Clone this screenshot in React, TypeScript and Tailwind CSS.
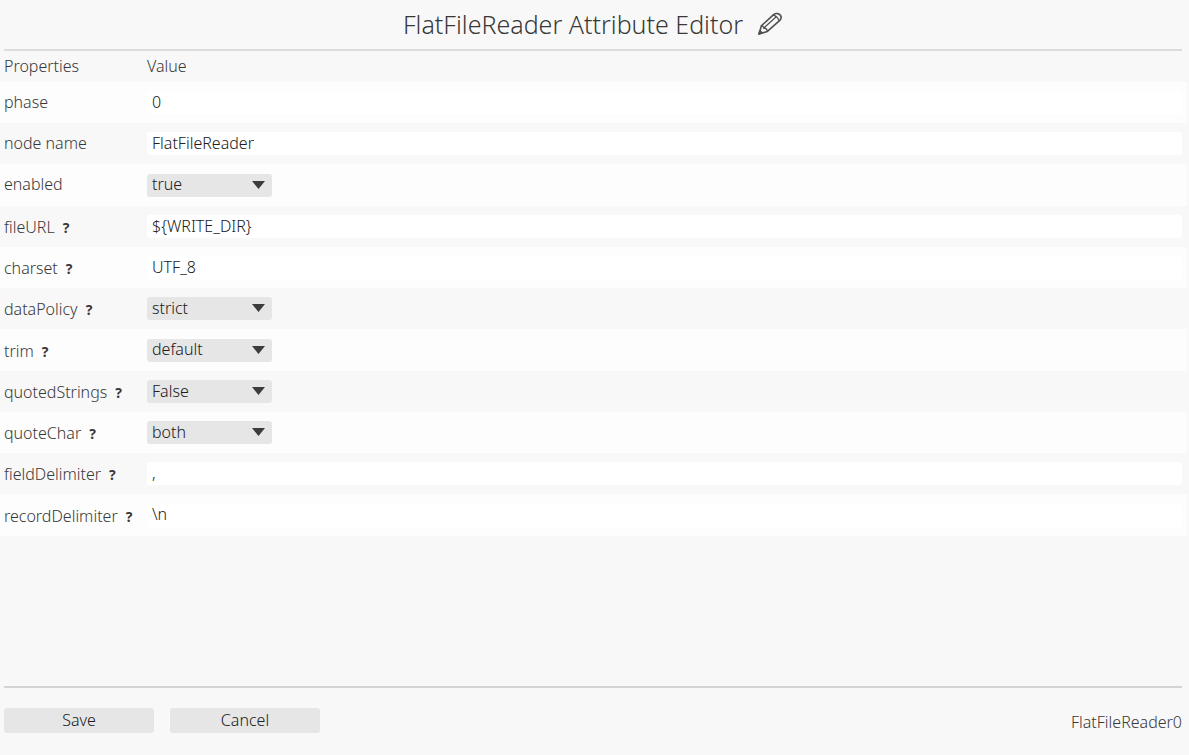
import { useState } from "react";

type Field = {
  name: string;
  value: string;
  options?: string[];
  help?: string;
};

const fields: Field[] = [
  { name: "phase", value: "0" },
  { name: "node name", value: "FlatFileReader" },
  { name: "enabled", value: "true", options: ["true", "false"] },
  { name: "fileURL", value: "${WRITE_DIR}", help: "Path of the file to read" },
  { name: "charset", value: "UTF_8", help: "Character encoding of the file" },
  { name: "dataPolicy", value: "strict", options: ["strict", "controlled", "lenient"], help: "How malformed records are handled" },
  { name: "trim", value: "default", options: ["default", "true", "false"], help: "Trim surrounding whitespace" },
  { name: "quotedStrings", value: "False", options: ["False", "True"], help: "Whether fields may be quoted" },
  { name: "quoteChar", value: "both", options: ["both", "single", "double"], help: "Accepted quote character" },
  { name: "fieldDelimiter", value: ",", help: "Separator between fields" },
  { name: "recordDelimiter", value: "\\n", help: "Separator between records" },
];

function PencilIcon() {
  return (
    <svg width="26" height="24" viewBox="0 0 26 24" fill="none" stroke="currentColor" strokeWidth="1.6" strokeLinejoin="round" strokeLinecap="round" aria-hidden="true">
      <path d="M2 22 4.4 13.8 16.6 2.6Q18.4 1.2 20.6 1.6 24 2.6 24.2 5.6 24.2 7 22.8 8.4L10.4 19.4Z" />
      <path d="M4.4 13.8Q6.400 13.600 6.8 16 9.800 16 10.4 19.4" strokeWidth="1.3" />
      <path d="M6.8 16 19.2 4.8" strokeWidth="1.2" />
      <path d="M16.200 3.2Q20.400 4.200 22 8.6" strokeWidth="1.2" />
      <path d="M2 22 2.9 18.8 5.2 20.8Z" fill="currentColor" />
    </svg>
  );
}

function FieldRow({ field }: { field: Field }) {
  const [value, setValue] = useState(field.value);
  const id = "field-" + field.name.replace(" ", "-");
  return (
    <tr className="h-[41px] odd:bg-[#fdfdfd] nth-[4n+3]:h-[42px]">
      <th scope="row" className={"p-0 pl-1 text-left align-middle font-light whitespace-nowrap " + (field.help ? "pt-0.5" : "pb-0.5")}>
        <label htmlFor={id}>{field.name}</label>
        {field.help && (
          <button type="button" title={field.help} className="ml-2 text-sm leading-5 font-bold">
            ?
          </button>
        )}
      </th>
      <td className="p-0 pr-[5px] align-middle">
        {field.options ? (
          <div className="relative h-[23px] w-[125px]">
            <select
              id={id}
              value={value}
              onChange={(e) => setValue(e.target.value)}
              className="block h-[23px] w-full appearance-none rounded-[3px] bg-[#e6e6e6] pb-0.5 pl-[5px] leading-5 text-[#202020]"
            >
              {field.options.map((o) => (
                <option key={o}>{o}</option>
              ))}
            </select>
            <svg className="pointer-events-none absolute top-[7px] right-[7px]" width="13" height="8" viewBox="0 0 13 8" fill="#3c3c3c" aria-hidden="true">
              <path d="M0 0h13L6.500 8z" />
            </svg>
          </div>
        ) : (
          <input
            id={id}
            type="text"
            value={value}
            onChange={(e) => setValue(e.target.value)}
            className="block h-[23px] w-full rounded-[3px] bg-white pb-0.5 pl-[5px] leading-5 text-[#202020]"
          />
        )}
      </td>
    </tr>
  );
}

export default function App() {
  return (
    <form
      onSubmit={(e) => e.preventDefault()}
      className="flex min-h-screen flex-col bg-[#f8f8f8] font-['Noto_Sans',sans-serif] text-base leading-5 font-light text-[#383838]"
    >
      <header className="mr-[7px] ml-1 flex h-[51px] items-center justify-center gap-3.5 border-b-2 border-[#dcdcdc] pb-0.5">
        <h1 className="text-[25px] leading-8 font-light">FlatFileReader Attribute Editor</h1>
        <button type="button" aria-label="Rename" className="text-[#505050]">
          <PencilIcon />
        </button>
      </header>
      <main className="grow pr-0.5">
        <table className="w-full table-fixed border-collapse">
          <colgroup>
            <col className="w-[147px]" />
            <col />
          </colgroup>
          <thead>
            <tr className="h-[31px]">
              <th scope="col" className="p-0 pb-0.5 pl-1 text-left font-light">Properties</th>
              <th scope="col" className="p-0 pb-0.5 text-left font-light">Value</th>
            </tr>
          </thead>
          <tbody>
            {fields.map((f) => (
              <FieldRow key={f.name} field={f} />
            ))}
          </tbody>
        </table>
      </main>
      <footer className="mr-[7px] ml-1 flex h-[69px] items-start gap-4 border-t-2 border-[#d4d4d4] pt-5 text-[#202020]">
        <button type="submit" className="h-[25px] w-[150px] rounded-[3px] bg-[#e6e6e6] pb-0.5">Save</button>
        <button type="button" className="h-[25px] w-[150px] rounded-[3px] bg-[#e6e6e6] pb-0.5">Cancel</button>
        <span className="ml-auto pt-1 text-[#383838]">FlatFileReader0</span>
      </footer>
    </form>
  );
}
